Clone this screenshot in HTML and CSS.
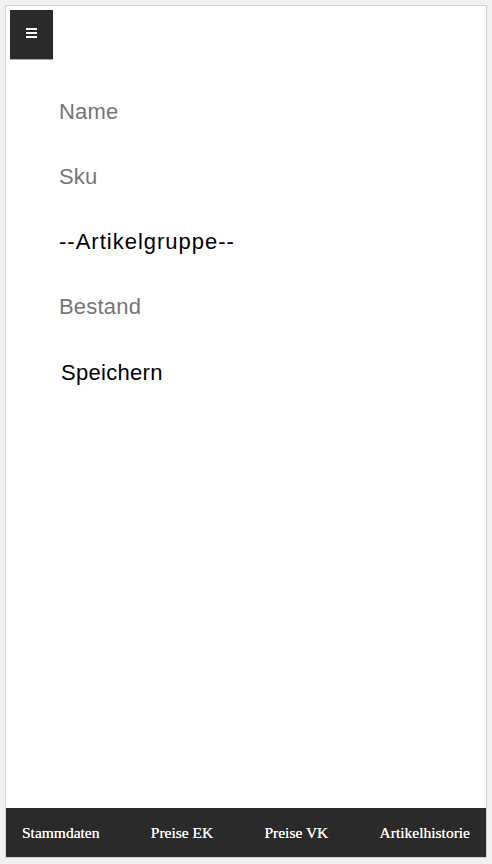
FILE: index.html
```html
<!DOCTYPE html>
<html lang="de">
<head>
<meta charset="utf-8">
<title>Artikel</title>
<link rel="stylesheet" href="styles.css">
</head>
<body>
<div class="panel">
  <header class="topbar">
    <button class="menu-btn" type="button" aria-label="Menü">
      <span class="bar"></span><span class="bar"></span><span class="bar"></span>
    </button>
  </header>
  <form class="form">
    <div class="row"><input class="field" type="text" placeholder="Name"></div>
    <div class="row"><input class="field" type="text" placeholder="Sku"></div>
    <div class="row"><select class="field select"><option>--Artikelgruppe--</option></select></div>
    <div class="row"><input class="field" type="text" placeholder="Bestand"></div>
    <div class="row"><button class="save" type="button">Speichern</button></div>
  </form>
  <nav class="tabs">
    <a class="tab">Stammdaten</a>
    <a class="tab">Preise EK</a>
    <a class="tab">Preise VK</a>
    <a class="tab">Artikelhistorie</a>
  </nav>
</div>
</body>
</html>
```
FILE: styles.css
```css
html, body {
  margin: 0;
  padding: 0;
}
body {
  background: #f1f1f1;
  width: 492px;
  height: 864px;
  overflow: hidden;
}
.panel {
  margin: 5px 0 0 5px;
  width: 480px;
  height: 851px;
  border: 1px solid #d2d2d2;
  background: #ffffff;
  display: flex;
  flex-direction: column;
}
.topbar {
  padding: 4px 0 0 4px;
  display: flex;
}
.menu-btn {
  width: 43px;
  height: 50px;
  margin: 0;
  padding: 0;
  border: none;
  border-bottom: 1px solid #a8a8a8;
  background: #2a2a2a;
  display: flex;
  flex-direction: column;
  align-items: center;
  justify-content: center;
  gap: 2px;
  padding-bottom: 3px;
}
.menu-btn .bar {
  display: block;
  width: 11px;
  height: 2px;
  background: #ffffff;
}
.form {
  padding: 19px 0 0 53px;
  display: flex;
  flex-direction: column;
}
.row {
  height: 65px;
  display: flex;
  align-items: center;
}
.field {
  font-family: "Liberation Sans", Arial, sans-serif;
  font-size: 22px;
  letter-spacing: 0.2px;
  color: #000000;
  border: none;
  outline: none;
  background: transparent;
  padding: 0;
  margin: 0;
  width: 380px;
}
.field::placeholder {
  color: #767676;
}
.select {
  -webkit-appearance: none;
  appearance: none;
  letter-spacing: 1px;
}
.save {
  font-family: "Liberation Sans", Arial, sans-serif;
  font-size: 22px;
  letter-spacing: 0.3px;
  color: #000000;
  background: transparent;
  border: none;
  padding: 0 0 0 2px;
  margin: 3px 0 0 0;
}
.tabs {
  margin-top: auto;
  height: 49px;
  background: #2a2a2a;
  display: flex;
  justify-content: space-between;
  align-items: center;
  padding: 0 16px 0 16px;
}
.tab {
  font-family: "Liberation Serif", "Times New Roman", serif;
  font-size: 15.5px;
  color: #ffffff;
  text-decoration: none;
  text-shadow: 0 0 0.4px #ffffff;
}
```
